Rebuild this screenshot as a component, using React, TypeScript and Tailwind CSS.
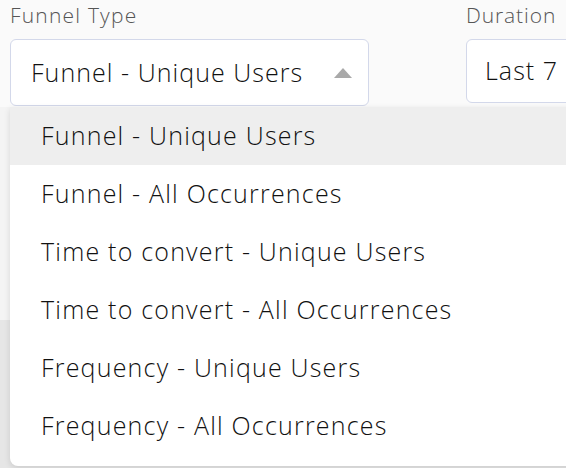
import { useState } from 'react';

const options = [
  'Funnel - Unique Users',
  'Funnel - All Occurrences',
  'Time to convert - Unique Users',
  'Time to convert - All Occurrences',
  'Frequency - Unique Users',
  'Frequency - All Occurrences',
];

export default function App() {
  const [selected, setSelected] = useState(options[0]);

  return (
    <div className="relative w-[566px] h-[468px] overflow-hidden bg-[#efefef] font-['Open_Sans',sans-serif] font-light text-[#111] tracking-[1.2px]">
      {/* Filters */}
      <div className="flex gap-[97px] bg-[#fafafa] pl-[10px] h-[107px]">
        <div className="flex flex-col">
          <label className="text-[21px] leading-[32px] text-[#555] -mt-[1px] tracking-[1.2px]">Funnel Type</label>
          <button className="mt-[8px] w-[359px] h-[67px] flex items-center justify-between pl-[20px] pr-[16px] bg-white border border-[#d3d8ea] rounded-[6px] text-[25px] font-light tracking-[1.05px]">
            <span>{selected}</span>
            <svg width="18" height="10" viewBox="0 0 18 10">
              <path d="M9 0 L18 10 L0 10 Z" fill="#a9a9a9" />
            </svg>
          </button>
        </div>
        <div className="flex flex-col">
          <label className="text-[21px] leading-[32px] text-[#555] -mt-[1px] tracking-[0.9px]">Duration</label>
          <button className="mt-[8px] w-[200px] h-[64px] flex items-center pl-[18px] bg-white border border-[#d3d8ea] rounded-[6px] text-[25px] font-light tracking-[1.05px] whitespace-nowrap">
            Last 7 days
          </button>
        </div>
      </div>

      {/* Content behind */}
      <div className="h-[213px] bg-[#f4f4f4]" />
      <div className="h-[148px] bg-[#e6e6e6]" />

      {/* Dropdown menu */}
      <ul className="absolute left-[10px] top-[107px] w-[600px] h-[359px] bg-white rounded-b-[8px] shadow-[0_2px_6px_rgba(0,0,0,0.12)] py-0">
        {options.map((o) => (
          <li
            key={o}
            onClick={() => setSelected(o)}
            className={`h-[58px] flex items-center pl-[31px] text-[25px] cursor-pointer ${o === selected ? 'bg-[#eeeeee]' : ''}`}
          >
            {o}
          </li>
        ))}
      </ul>
    </div>
  );
}
